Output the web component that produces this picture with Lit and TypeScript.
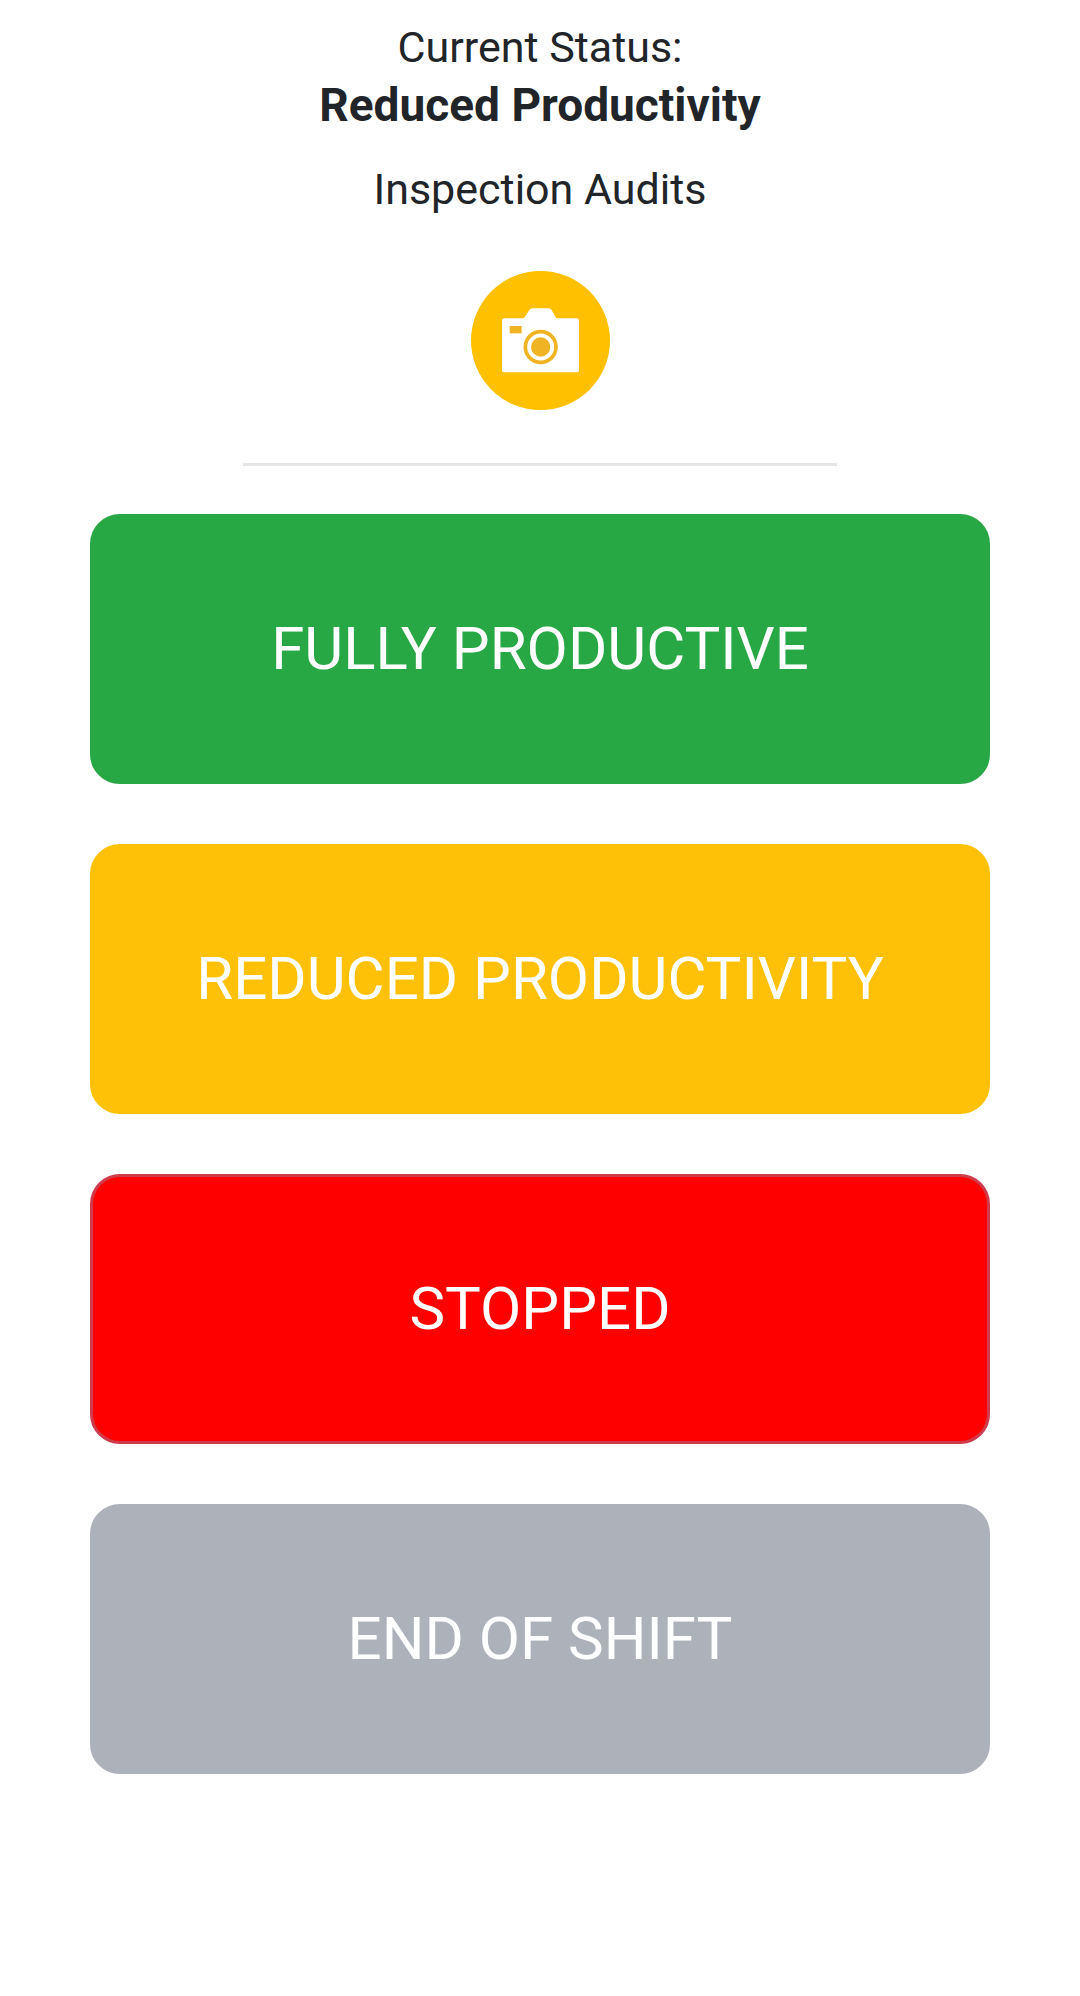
import { LitElement, html, css } from "lit";
import { customElement, state } from "lit/decorators.js";
import { classMap } from "lit/directives/class-map.js";

interface StatusOption {
  kind: string;
  label: string;
}

const OPTIONS: StatusOption[] = [
  { kind: "full", label: "FULLY PRODUCTIVE" },
  { kind: "reduced", label: "REDUCED PRODUCTIVITY" },
  { kind: "stopped", label: "STOPPED" },
  { kind: "ended", label: "END OF SHIFT" },
];

@customElement("app-root")
export class AppRoot extends LitElement {
  static styles = css`
    :host {
      display: block;
      min-height: 100vh;
      box-sizing: border-box;
      padding-top: 16px;
      background: #fff;
      color: #212529;
      font-family: Roboto, "Liberation Sans", sans-serif;
    }
    .page {
      display: flex;
      flex-direction: column;
      align-items: center;
    }
    .status {
      display: flex;
      flex-direction: column;
      align-items: center;
      text-align: center;
    }
    .line {
      margin: 0;
      font-size: 43px;
      line-height: 63px;
      font-weight: 400;
    }
    .current {
      margin: 0 0 27px;
      font-size: 46px;
      line-height: 52px;
      font-weight: 700;
    }
    .camera {
      display: block;
      margin: 50px 0 0;
      padding: 0;
      border: 0;
      border-radius: 50%;
      background: none;
      cursor: pointer;
    }
    .icon {
      display: block;
      width: 139px;
      height: 139px;
    }
    .rule {
      width: 55%;
      margin: 53px 0 48px;
      border: 0;
      border-top: 3px solid #e5e5e5;
    }
    .options {
      display: flex;
      flex-direction: column;
      gap: 60px;
      width: 100%;
      box-sizing: border-box;
      padding: 0 90px 60px;
    }
    .option {
      width: 100%;
      padding: 87px 24px;
      border: 3px solid transparent;
      border-radius: 30px;
      color: #fff;
      font-family: inherit;
      font-size: 60px;
      line-height: 90px;
      font-weight: 400;
      cursor: pointer;
    }
    .full {
      background: #28a745;
      border-color: #28a745;
    }
    .reduced {
      background: #ffc107;
      border-color: #ffc107;
    }
    .stopped {
      background: #ff0000;
      border-color: #cf3b4b;
    }
    .ended {
      background: #adb1b9;
      border-color: #adb1b9;
    }
  `;

  @state() private current = "Reduced Productivity";

  render() {
    return html`
      <main class="page">
        <header class="status">
          <p class="line">Current Status:</p>
          <h1 class="current">${this.current}</h1>
          <p class="line">Inspection Audits</p>
        </header>
        <button class="camera" type="button" aria-label="Take photo">
          <svg class="icon" viewBox="33 32 417 417" aria-hidden="true">
            <circle cx="241.5" cy="240.5" r="208.5" fill="#ffc000" />
            <path
              fill="#fff"
              d="M134 174H186Q192 174 195 169L208 149Q211 144 217 144H266Q272 144 275 149L286 169Q288 174 294 174H349Q357 174 357 182V328Q357 336 349 336H134Q126 336 126 328V182Q126 174 134 174Z"
            />
            <rect x="149" y="197" width="36" height="22" fill="#efb323" />
            <circle cx="242" cy="260" r="46" fill="none" stroke="#efb323" stroke-width="11" />
            <circle cx="242" cy="260" r="29" fill="#efb323" />
          </svg>
        </button>
        <hr class="rule" />
        <div class="options">
          ${OPTIONS.map(
            (o) => html`<button type="button" class=${classMap({ option: true, [o.kind]: true })}>${o.label}</button>`
          )}
        </div>
      </main>
    `;
  }
}
